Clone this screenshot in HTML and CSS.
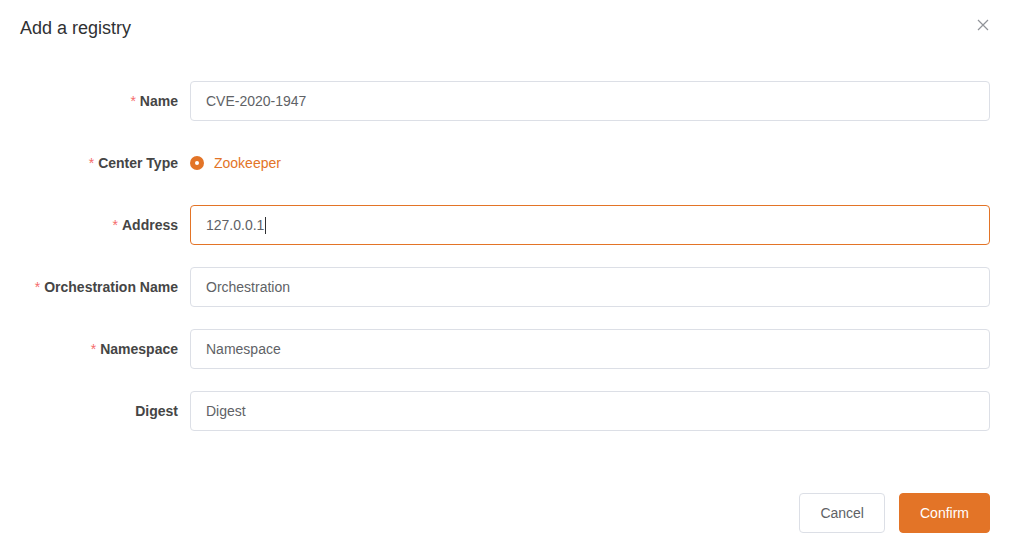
FILE: index.html
```html
<!DOCTYPE html>
<html>
<head>
<meta charset="utf-8">
<link rel="stylesheet" href="styles.css">
</head>
<body>
<div class="dialog">
  <div class="header">
    <span class="title">Add a registry</span>
    <button class="close" aria-label="Close">
      <svg width="12" height="12" viewBox="0 0 12 12"><path d="M1 1L11 11M11 1L1 11" stroke="#909399" stroke-width="1.2" fill="none"/></svg>
    </button>
  </div>
  <form class="form">
    <div class="row">
      <label class="label req">Name</label>
      <div class="control"><input class="input" value="CVE-2020-1947"></div>
    </div>
    <div class="row">
      <label class="label req">Center Type</label>
      <div class="control radio-wrap">
        <span class="radio"></span><span class="radio-text">Zookeeper</span>
      </div>
    </div>
    <div class="row">
      <label class="label req">Address</label>
      <div class="control"><div class="input focus"><span>127.0.0.1</span><span class="caret"></span></div></div>
    </div>
    <div class="row">
      <label class="label req">Orchestration Name</label>
      <div class="control"><input class="input" value="Orchestration"></div>
    </div>
    <div class="row">
      <label class="label req">Namespace</label>
      <div class="control"><input class="input" value="Namespace"></div>
    </div>
    <div class="row">
      <label class="label">Digest</label>
      <div class="control"><input class="input" value="Digest"></div>
    </div>
  </form>
  <div class="footer">
    <button class="btn">Cancel</button>
    <button class="btn primary">Confirm</button>
  </div>
</div>
</body>
</html>
```
FILE: styles.css
```css
* { box-sizing: border-box; }
html, body { margin: 0; padding: 0; background: #fff; }
body { font-family: "Liberation Sans", Arial, sans-serif; font-size: 14px; color: #606266; }
.dialog { width: 1009px; padding: 16px 19px 0 20px; }
.header { display: flex; justify-content: space-between; align-items: flex-start; height: 65px; }
.title { font-size: 18px; line-height: 24px; color: #303133; }
.close { border: 0; background: none; padding: 0; margin: 1px -1px 0 0; width: 16px; height: 16px; display: flex; align-items: center; justify-content: center; cursor: pointer; }
.form { display: flex; flex-direction: column; gap: 22px; }
.row { display: flex; align-items: center; height: 40px; }
.label { width: 170px; padding-right: 12px; text-align: right; font-weight: bold; color: #454545; line-height: 40px; }
.label.req::before { content: "*"; color: #f56c6c; margin-right: 4px; font-weight: normal; }
.control { flex: 1; }
.input { display: flex; align-items: center; width: 100%; height: 40px; border: 1px solid #dcdfe6; border-radius: 4px; padding: 0 15px; font: inherit; color: #606266; outline: none; background: #fff; }
.input.focus { border-color: #e37427; }
.caret { display: inline-block; width: 1px; height: 17px; background: #303133; margin-left: 1px; }
.radio-wrap { display: flex; align-items: center; }
.radio { width: 14px; height: 14px; border-radius: 50%; background: #e37427; position: relative; }
.radio::after { content: ""; position: absolute; width: 4px; height: 4px; border-radius: 50%; background: #fff; left: 5px; top: 5px; }
.radio-text { color: #e37427; margin-left: 10px; }
.footer { display: flex; justify-content: flex-end; gap: 14px; margin-top: 62px; }
.btn { height: 40px; padding: 0 20px; border: 1px solid #dcdfe6; border-radius: 4px; background: #fff; color: #606266; font: inherit; cursor: pointer; }
.btn.primary { background: #e37427; border-color: #e37427; color: #fff; }
```
